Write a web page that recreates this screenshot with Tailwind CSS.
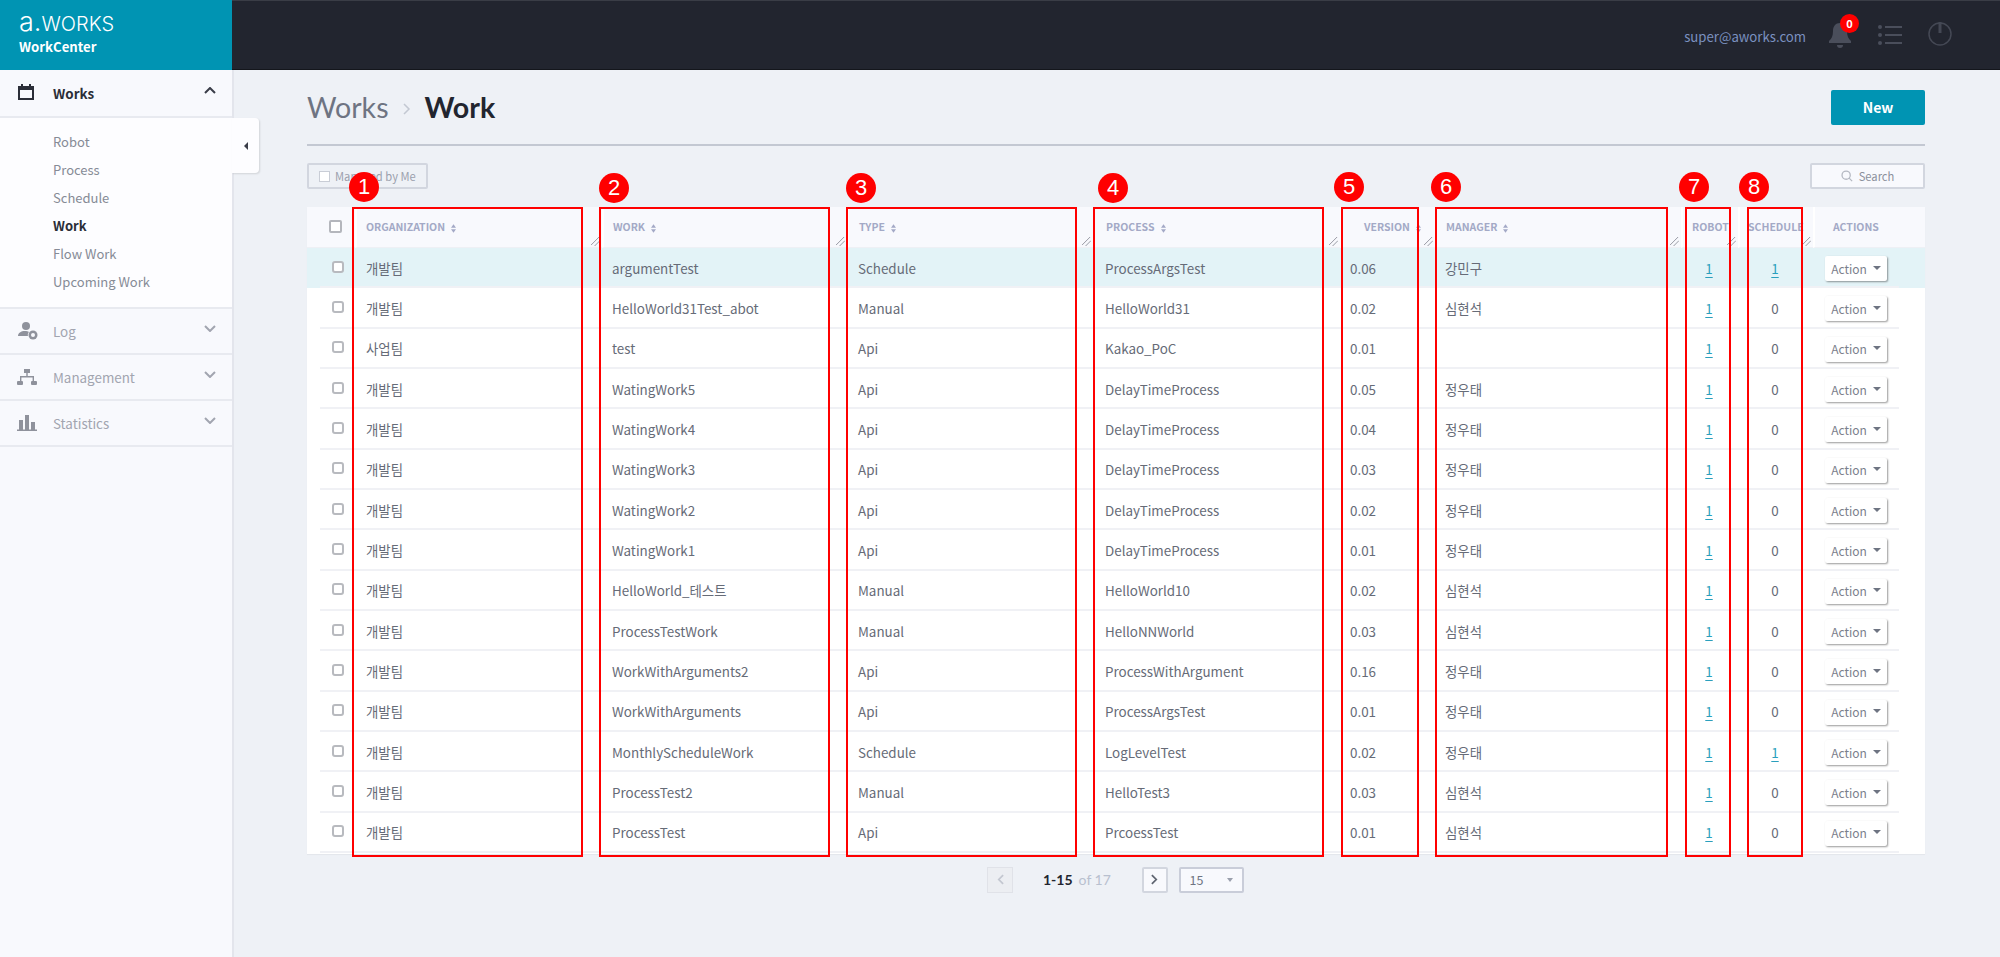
<!DOCTYPE html>
<html lang="en">
<head>
    <meta charset="UTF-8">
    <title>WorkCenter</title>
    <script src="https://cdn.jsdelivr.net/npm/@tailwindcss/browser@4"></script>
</head>
<body class="bg-[#eef1f6]">
<div class="relative w-[2000px] h-[957px] overflow-hidden flex flex-col font-['Noto_Sans_CJK_KR','Noto_Sans',sans-serif] text-[#666b77]">

    <!-- top bar -->
    <header class="flex h-[70px] shrink-0">
        <div class="w-[232px] bg-[#0094b3] pl-[19px] pt-[7px] text-white">
            <div class="flex items-baseline font-['Inter',sans-serif] font-light leading-[30px] h-[30px]">
                <span class="text-[27px]">a.</span><span class="uppercase text-[20px]">works</span>
            </div>
            <div class="font-bold text-[13.200px] leading-[16px] mt-[2px]">WorkCenter</div>
        </div>
        <div class="flex-1 flex items-center justify-end bg-[#22252f] border-t border-t-[#3a3d46] border-b border-b-[#14161c]">
            <span class="text-[13.200px] text-[#7b91c0] mr-[22px] mt-[4px]">super@aworks.com</span>
            <div class="relative w-[24px] h-[26px] mr-[26px] mt-[2px]">
                <svg viewBox="0 0 24 26" class="w-[24px] h-[26px] fill-[#4a4e5b]"><path d="M12 0c-4.500 0-7 3.500-7 8 0 5-1.500 8-4 10v2h22v-2c-2.500-2-4-5-4-10 0-4.500-2.500-8-7-8z"/><path d="M9 22h6c0 2-1 3-3 3s-3-1-3-3z"/></svg>
                <span class="absolute left-[12px] top-[-9px] w-[19px] h-[19px] rounded-full bg-[#ff0000] text-white text-[11px] font-bold flex items-center justify-center">0</span>
            </div>
            <svg viewBox="0 0 24 20" class="w-[24px] h-[20px] mr-[26px] fill-[#4a4e5b]"><circle cx="2" cy="2" r="2"/><circle cx="2" cy="10" r="2"/><circle cx="2" cy="18" r="2"/><rect x="7" y="1" width="17" height="2"/><rect x="7" y="9" width="17" height="2"/><rect x="7" y="17" width="17" height="2"/></svg>
            <svg viewBox="0 0 24 24" class="w-[24px] h-[24px] mr-[48px] mb-[2px] fill-none stroke-[#444854]"><circle cx="12" cy="12" r="11" stroke-width="1.500"/><path d="M12 0v11" stroke-width="3"/></svg>
        </div>
    </header>

    <div class="flex flex-1 min-h-0">
        <!-- sidebar -->
        <aside class="relative w-[234px] shrink-0 bg-[#f8f9fd] border-r-2 border-[#e3e5ec] text-[13.400px]">
            <div class="flex items-center h-[48px] border-b-2 border-[#e8eaf0] pl-[18px] pr-[16px]">
                <svg viewBox="0 0 16 16" class="w-[16px] h-[16px] mb-[3px] fill-none stroke-[#2b2e38]"><rect x="1" y="3" width="14" height="12" stroke-width="2"/><path d="M1 5h14" stroke-width="2"/><path d="M4 0v3M12 0v3" stroke-width="2"/></svg>
                <span class="ml-[19px] flex-1 font-bold text-[#2b2e38]">Works</span>
                <svg viewBox="0 0 12 7" class="w-[12px] h-[7px] mb-[5px] fill-none stroke-[#3a3d48] stroke-2"><path d="M1 6l5-5 5 5"/></svg>
            </div>
            <nav class="bg-[#fdfdff] h-[191px] pt-[10px] pl-[53px] flex flex-col text-[13px] leading-[28.100px] text-[#868b96] border-b-2 border-[#e8eaf0]">
                <a>Robot</a>
                <a>Process</a>
                <a>Schedule</a>
                <a class="font-bold text-[#2b2e38]">Work</a>
                <a>Flow Work</a>
                <a>Upcoming Work</a>
            </nav>
            <div class="flex items-center h-[46px] border-b-2 border-[#e8eaf0] pl-[18px] pr-[16px] text-[#a2a5b0]">
                <svg viewBox="0 0 20 18" class="w-[20px] h-[18px] fill-[#8f929c]"><circle cx="8" cy="4" r="4"/><path d="M0 14c0-3 3-5 7-5 1.500 0 3 .3 4 1-1 1-1.500 2.500-1 4z"/><circle cx="15" cy="13" r="4.500"/><circle cx="15" cy="13" r="2" fill="#f8f9fd"/></svg>
                <span class="ml-[15px] flex-1">Log</span>
                <svg viewBox="0 0 12 7" class="w-[12px] h-[7px] mb-[5px] fill-none stroke-[#a2a5b0] stroke-2"><path d="M1 1l5 5 5-5"/></svg>
            </div>
            <div class="flex items-center h-[46px] border-b-2 border-[#e8eaf0] pl-[17px] pr-[16px] text-[#a2a5b0]">
                <svg viewBox="0 0 20 16" class="w-[20px] h-[16px] fill-[#8f929c]"><rect x="7" y="0" width="6" height="4"/><rect x="0" y="12" width="6" height="4" rx="1"/><rect x="14" y="12" width="6" height="4" rx="1"/><path d="M9.300 4h1.400v3H17v5h-1.400V8.400H4.400V12H3V7h6.300z"/></svg>
                <span class="ml-[16px] flex-1">Management</span>
                <svg viewBox="0 0 12 7" class="w-[12px] h-[7px] mb-[5px] fill-none stroke-[#a2a5b0] stroke-2"><path d="M1 1l5 5 5-5"/></svg>
            </div>
            <div class="flex items-center h-[46px] border-b-2 border-[#e8eaf0] pl-[17px] pr-[16px] text-[#a2a5b0]">
                <svg viewBox="0 0 20 16" class="w-[20px] h-[16px] fill-[#8f929c]"><rect x="2" y="5" width="4" height="10"/><rect x="8" y="0" width="4" height="15"/><rect x="14" y="7" width="4" height="8"/><rect x="0" y="14.500" width="20" height="1.500"/></svg>
                <span class="ml-[16px] flex-1">Statistics</span>
                <svg viewBox="0 0 12 7" class="w-[12px] h-[7px] mb-[5px] fill-none stroke-[#a2a5b0] stroke-2"><path d="M1 1l5 5 5-5"/></svg>
            </div>
            <!-- collapse tab -->
            <button class="absolute left-[232px] top-[48px] w-[27px] h-[55px] bg-[#fdfdff] rounded-r-[4px] shadow-[1px_1px_2px_rgba(0,0,0,0.12)] flex items-center justify-center">
                <span class="w-0 h-0 border-y-[4px] border-y-transparent border-r-[4px] border-r-[#3a3d48]"></span>
            </button>
        </aside>

        <!-- content -->
        <main class="w-[1766px] shrink-0 pl-[73px] pr-[75px]">
            <div class="flex items-center justify-between h-[76px] border-b-2 border-[#c3c8d2]">
                <h1 class="flex items-center font-['Lato',sans-serif] text-[28.600px] leading-[36px] mt-[-1px]">
                    <span class="text-[#6e7482]">Works</span>
                    <svg viewBox="0 0 8 12" class="w-[8px] h-[12px] mx-[14px] mt-[4px] fill-none stroke-[#c3c8d2] stroke-[1.500]"><path d="M1 1l5 5-5 5"/></svg>
                    <span class="font-bold text-[#22252f]">Work</span>
                </h1>
                <button class="w-[94px] h-[35px] bg-[#0094b3] rounded-[2px] text-white text-[14px] font-bold">New</button>
            </div>

            <div class="flex justify-between mt-[17px]">
                <label class="flex items-center w-[121px] h-[26px] border-2 border-[#d2d6df] rounded-[2px] pl-[10px] text-[11.200px] text-[#9ba0ad]">
                    <span class="w-[11px] h-[11px] border border-[#c9cdd6] bg-white mr-[5px]"></span>Managed by Me
                </label>
                <button class="flex items-center justify-center w-[115px] h-[26px] border-2 border-[#d2d6df] rounded-[2px] bg-[#f8f9fd] text-[11.200px] text-[#8b909c]">
                    <svg viewBox="0 0 14 14" class="w-[12px] h-[12px] mr-[6px] fill-none stroke-[#b4b8c2] stroke-[1.500]"><circle cx="6" cy="6" r="4.800"/><path d="M9.500 9.500L13 13"/></svg>Search
                </button>
            </div>

            <table class="mt-[18px] w-[1618px] table-fixed border-separate border-spacing-0 bg-white text-[13.400px] shadow-[0_1px_1px_rgba(0,0,0,0.04)]">
                <colgroup>
                    <col class="w-[13px]"><col class="w-[35px]">
                    <col class="w-[247px]"><col class="w-[245px]"><col class="w-[246px]"><col class="w-[247px]">
                    <col class="w-[95px]"><col class="w-[246px]"><col class="w-[57px]"><col class="w-[75px]">
                    <col class="w-[86px]"><col class="w-[26px]">
                </colgroup>
                <thead id="head"></thead>
                <tbody id="rows"></tbody>
                <tfoot><tr><td colspan="12" class="h-[1px]"></td></tr></tfoot>
            </table>

            <div class="flex items-center mt-[13px] pl-[680px] font-['Lato',sans-serif] text-[14px]">
                <button class="w-[26px] h-[26px] bg-[#eceef2] border border-[#e0e2e8] flex items-center justify-center">
                    <svg viewBox="0 0 8 12" class="w-[7px] h-[11px] fill-none stroke-[#c3c7d0] stroke-2"><path d="M7 1L2 6l5 5"/></svg>
                </button>
                <span class="ml-[30px] font-bold text-[#22252f]">1-15</span>
                <span class="ml-[6px] w-[63px] text-[#b8c0cf]">of 17</span>
                <button class="w-[26px] h-[26px] bg-[#f8f9fd] border-2 border-[#d2d6df] rounded-[2px] flex items-center justify-center">
                    <svg viewBox="0 0 8 12" class="w-[7px] h-[11px] fill-none stroke-[#5e6470] stroke-2"><path d="M1 1l5 5-5 5"/></svg>
                </button>
                <div class="ml-[11px] flex items-center justify-between w-[65px] h-[26px] bg-[#f8f9fd] border-2 border-[#c9cdd9] rounded-[2px] pl-[9px] pr-[9px] font-['Noto_Sans_CJK_KR',sans-serif] text-[12.500px] text-[#6e7482]">
                    15<span class="w-0 h-0 border-x-[3px] border-x-transparent border-t-[4px] border-t-[#9ba0ad]"></span>
                </div>
            </div>
        </main>
    </div>

    <!-- red annotation boxes -->
    <div class="absolute left-[352px] top-[207px] w-[231px] h-[650px] border-2 border-[#ff0000]"></div>
    <div class="absolute left-[599px] top-[207px] w-[231px] h-[650px] border-2 border-[#ff0000]"></div>
    <div class="absolute left-[846px] top-[207px] w-[231px] h-[650px] border-2 border-[#ff0000]"></div>
    <div class="absolute left-[1093px] top-[207px] w-[231px] h-[650px] border-2 border-[#ff0000]"></div>
    <div class="absolute left-[1341px] top-[207px] w-[78px] h-[650px] border-2 border-[#ff0000]"></div>
    <div class="absolute left-[1435px] top-[207px] w-[233px] h-[650px] border-2 border-[#ff0000]"></div>
    <div class="absolute left-[1685px] top-[207px] w-[46px] h-[650px] border-2 border-[#ff0000]"></div>
    <div class="absolute left-[1747px] top-[207px] w-[56px] h-[650px] border-2 border-[#ff0000]"></div>

    <!-- numbered markers -->
    <span class="absolute left-[349px] top-[172px] w-[30px] h-[30px] rounded-full bg-[#ff0000] text-white text-[22px] leading-[30px] text-center font-['Liberation_Sans',sans-serif]">1</span>
    <span class="absolute left-[599px] top-[173px] w-[30px] h-[30px] rounded-full bg-[#ff0000] text-white text-[22px] leading-[30px] text-center font-['Liberation_Sans',sans-serif]">2</span>
    <span class="absolute left-[846px] top-[173px] w-[30px] h-[30px] rounded-full bg-[#ff0000] text-white text-[22px] leading-[30px] text-center font-['Liberation_Sans',sans-serif]">3</span>
    <span class="absolute left-[1098px] top-[173px] w-[30px] h-[30px] rounded-full bg-[#ff0000] text-white text-[22px] leading-[30px] text-center font-['Liberation_Sans',sans-serif]">4</span>
    <span class="absolute left-[1334px] top-[172px] w-[30px] h-[30px] rounded-full bg-[#ff0000] text-white text-[22px] leading-[30px] text-center font-['Liberation_Sans',sans-serif]">5</span>
    <span class="absolute left-[1431px] top-[172px] w-[30px] h-[30px] rounded-full bg-[#ff0000] text-white text-[22px] leading-[30px] text-center font-['Liberation_Sans',sans-serif]">6</span>
    <span class="absolute left-[1679px] top-[172px] w-[30px] h-[30px] rounded-full bg-[#ff0000] text-white text-[22px] leading-[30px] text-center font-['Liberation_Sans',sans-serif]">7</span>
    <span class="absolute left-[1739px] top-[172px] w-[30px] h-[30px] rounded-full bg-[#ff0000] text-white text-[22px] leading-[30px] text-center font-['Liberation_Sans',sans-serif]">8</span>
</div>

<script>
    // header cells: label, left padding, sortable
    const columns = [
        ['Organization', 'pl-[9px]', true],
        ['Work', 'pl-[9px]', true],
        ['Type', 'pl-[10px]', true],
        ['Process', 'pl-[11px]', true],
        ['Version', 'pl-[22px]', true],
        ['Manager', 'pl-[9px]', true],
        ['Robot', 'pl-[9px]', false],
        ['Schedule', 'pl-[8px]', false]
    ];

    const sortIcon = `<svg viewBox="0 0 6 10" class="inline-block w-[5px] h-[9px] ml-[6px] fill-[#a3a9c6]"><path d="M3 0l3 4H0zM3 10L0 6h6z"/></svg>`;
    const handle = `<svg viewBox="0 0 10 10" class="absolute right-[2px] bottom-[1px] w-[9px] h-[9px] stroke-[#8d909a] fill-none"><path d="M0 9l9-9M4 10l6-6"/></svg>`;

    const headCell = 'relative h-[41px] bg-[#f8f9fd] border-l-2 border-white border-b border-b-[#eef0f5] text-left align-middle uppercase text-[10.500px] font-bold text-[#a3a9c6] whitespace-nowrap';

    document.getElementById('head').innerHTML = `
        <tr>
            <th colspan="2" class="h-[41px] bg-[#f8f9fd] border-b border-b-[#eef0f5] pl-[22px] text-left">
                <span class="block w-[13px] h-[13px] mb-[2px] bg-white border-2 border-[#b4b6bc] rounded-[2px]"></span>
            </th>
            ${columns.map(([label, pad, sort]) => `
                <th class="${headCell} ${pad}">${label}${sort ? sortIcon : ''}${handle}</th>
            `).join('')}
            <th colspan="2" class="${headCell} pl-[18px]">Actions</th>
        </tr>`;

    const rows = [
        ['개발팀', 'argumentTest', 'Schedule', 'ProcessArgsTest', '0.06', '강민구', 1],
        ['개발팀', 'HelloWorld31Test_abot', 'Manual', 'HelloWorld31', '0.02', '심현석', 0],
        ['사업팀', 'test', 'Api', 'Kakao_PoC', '0.01', '', 0],
        ['개발팀', 'WatingWork5', 'Api', 'DelayTimeProcess', '0.05', '정우태', 0],
        ['개발팀', 'WatingWork4', 'Api', 'DelayTimeProcess', '0.04', '정우태', 0],
        ['개발팀', 'WatingWork3', 'Api', 'DelayTimeProcess', '0.03', '정우태', 0],
        ['개발팀', 'WatingWork2', 'Api', 'DelayTimeProcess', '0.02', '정우태', 0],
        ['개발팀', 'WatingWork1', 'Api', 'DelayTimeProcess', '0.01', '정우태', 0],
        ['개발팀', 'HelloWorld_테스트', 'Manual', 'HelloWorld10', '0.02', '심현석', 0],
        ['개발팀', 'ProcessTestWork', 'Manual', 'HelloNNWorld', '0.03', '심현석', 0],
        ['개발팀', 'WorkWithArguments2', 'Api', 'ProcessWithArgument', '0.16', '정우태', 0],
        ['개발팀', 'WorkWithArguments', 'Api', 'ProcessArgsTest', '0.01', '정우태', 0],
        ['개발팀', 'MonthlyScheduleWork', 'Schedule', 'LogLevelTest', '0.02', '정우태', 1],
        ['개발팀', 'ProcessTest2', 'Manual', 'HelloTest3', '0.03', '심현석', 0],
        ['개발팀', 'ProcessTest', 'Api', 'PrcoessTest', '0.01', '심현석', 0]
    ];

    const line = 'border-b-2 border-[#f0f1f5] pt-[1px]';
    const link = 'text-[#2a9fbd] underline underline-offset-[3px]';

    document.getElementById('rows').innerHTML = rows.map((r, i) => {
        const bg = i === 0 ? 'bg-[#e3f3f7]' : '';
        return `
        <tr class="h-[40.330px] ${bg}">
            <td></td>
            <td class="${line} pl-[12px]"><span class="block w-[12px] h-[12px] mb-[2px] bg-white border-2 border-[#b8babf] rounded-[3px]"></span></td>
            <td class="${line} pl-[11px]">${r[0]}</td>
            <td class="${line} pl-[10px]">${r[1]}</td>
            <td class="${line} pl-[11px]">${r[2]}</td>
            <td class="${line} pl-[12px]">${r[3]}</td>
            <td class="${line} pl-[10px]">${r[4]}</td>
            <td class="${line} pl-[10px]">${r[5]}</td>
            <td class="${line} text-center pr-[1px]"><a class="${link}">1</a></td>
            <td class="${line} text-center pr-[1px]">${r[6] ? `<a class="${link}">1</a>` : '0'}</td>
            <td class="${line} pl-[12px]">
                <button class="flex items-center justify-center w-[62px] h-[25px] mt-[2px] bg-white rounded-[2px] shadow-[1px_1px_2px_rgba(0,0,0,0.4)] text-[12px] text-[#7b808c]">
                    Action<span class="ml-[6px] mb-[2px] w-0 h-0 border-x-[4px] border-x-transparent border-t-[4px] border-t-[#6e7482]"></span>
                </button>
            </td>
            <td></td>
        </tr>`;
    }).join('');
</script>
</body>
</html>
